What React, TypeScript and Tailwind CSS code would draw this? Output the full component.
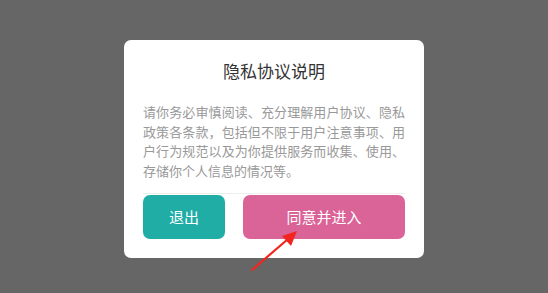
import React from 'react';

export default function App() {
  return (
    <div
      className="relative h-[293px] w-full bg-[#666666] flex justify-center pt-[40px] overflow-hidden"
      style={{ fontFamily: '"Noto Sans CJK SC", "Noto Sans", sans-serif' }}
    >
      {/* Dialog */}
      <div className="w-[300px] h-[218px] bg-white rounded-[7px] px-[19px] pt-[19px] flex flex-col">
        <h2 className="text-center text-[17px] leading-[24px] text-[#333333]">隐私协议说明</h2>
        <p className="mt-[19px] text-[13px] leading-[19.5px] text-[#999999] text-justify">
          请你务必审慎阅读、充分理解用户协议、隐私政策各条款，包括但不限于用户注意事项、用户行为规范以及为你提供服务而收集、使用、存储你个人信息的情况等。
        </p>
        <div className="mt-[13px] border-t border-[#eeeeee] pt-[1px] flex gap-[18px]">
          <button className="w-[82px] h-[44px] rounded-[7px] bg-[#1fada6] text-white text-[15px]">退出</button>
          <button className="flex-1 h-[44px] rounded-[7px] bg-[#da6398] text-white text-[15px]">同意并进入</button>
        </div>
      </div>

      {/* Annotation arrow */}
      <svg className="absolute left-0 top-0 pointer-events-none" width="548" height="293" viewBox="0 0 548 293">
        <line x1="252" y1="270" x2="288" y2="239" stroke="#f2261f" strokeWidth="2.2" strokeLinecap="round" />
        <polygon points="297,231 282,236 291,246" fill="#f2261f" />
      </svg>
    </div>
  );
}
